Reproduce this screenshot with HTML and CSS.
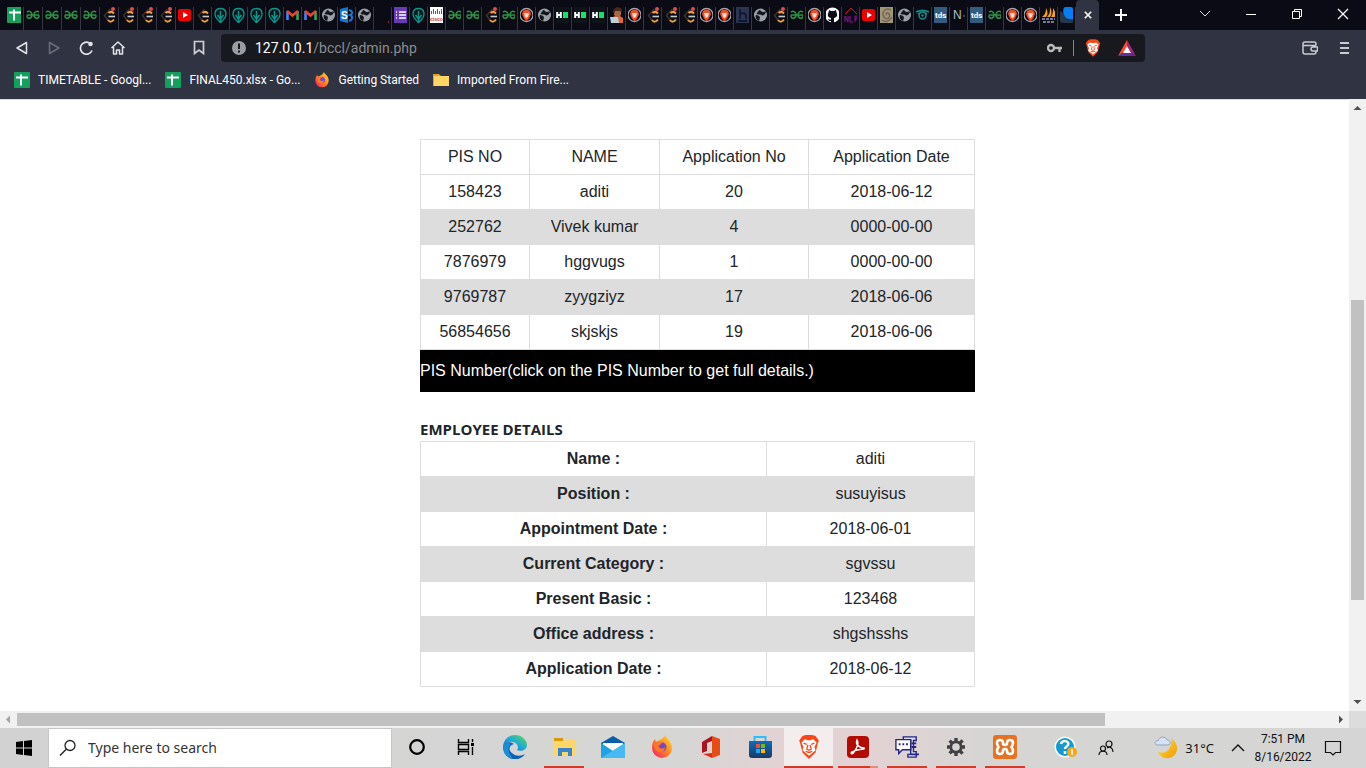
FILE: index.html
```html
<!DOCTYPE html>
<html lang="en">
<head>
<meta charset="utf-8">
<title>BCCL Admin</title>
<link rel="stylesheet" href="styles.css">
</head>
<body>
<svg class="sprite" aria-hidden="true">
  <defs>
    <linearGradient id="edgeA" x1="0" y1="1" x2="1" y2="0"><stop offset="0" stop-color="#0a5db5"/><stop offset=".5" stop-color="#1ba8dd"/><stop offset="1" stop-color="#63e04c"/></linearGradient>
    <linearGradient id="fireA" x1="1" y1="0" x2="0" y2="1"><stop offset="0" stop-color="#ffe93b"/><stop offset=".45" stop-color="#ff8a1c"/><stop offset="1" stop-color="#f5156c"/></linearGradient>
    <linearGradient id="storeA" x1="0" y1="0" x2="0" y2="1"><stop offset="0" stop-color="#0f6cbd"/><stop offset="1" stop-color="#183a66"/></linearGradient>
    <linearGradient id="moonA" x1="0" y1="0" x2="1" y2="1"><stop offset="0" stop-color="#ffe14a"/><stop offset="1" stop-color="#f09a00"/></linearGradient>
    <g id="sheets"><rect width="16" height="16" rx="1" fill="#12a05c"/><path d="M2 5.500h12M7 2.500v11" stroke="#fff" stroke-width="2"/></g>
    <g id="gfg" fill="none" stroke="#2f9247" stroke-width="1.500"><path d="M1 5.200C3 3.500 6 4.500 6 8s-4.500 4.500-5 1.500c0-1 .2-1.500.5-1.500h11c.3 0 .5.500.5 1.500-.5 3-5 2-5-1.500s3-4.500 5-2.800"/></g>
    <g id="leet" fill="none"><path d="M8.500 2 2.500 8.500 6.500 14" stroke="#3a3430" stroke-width="1.500"/><path d="M6.500 6C8.500 4 10 4.500 12 6.500M6 13c2 2.500 4 2 6-.5" stroke="#f2a235" stroke-width="2"/><path d="M6.500 9.500h6.500" stroke="#c8c8c8" stroke-width="1.600"/></g>
    <g id="leetdot"><use href="#leet"/><circle cx="11" cy="2" r="2" fill="#e34c4c"/></g>
    <g id="youtube"><rect y="2" width="13" height="12" rx="2" fill="#f00000"/><path d="m5 5 5 3-5 3z" fill="#fff"/></g>
    <g id="pin" fill="none" stroke="#0d968c"><path d="M5 14C-1 9 0 1.500 6.500 1.500S14 9 8 14l-1.500 2z" fill="#07191c" stroke-width="1.300"/><path d="M6.500 4v11M3.500 8l3 4 3-4" stroke-width="1.500"/></g>
    <g id="gmail" fill="none" stroke-width="2.600"><path d="M1.500 13V4" stroke="#4385f5"/><path d="M11.500 13V4" stroke="#34a853"/><path d="m1 4 5.500 4.500L12 4" stroke="#ea4335"/></g>
    <g id="globe"><circle cx="6.500" cy="8" r="6.500" fill="#9ba0a8"/><path d="M5 3c2 0 2 2 4 2 2 0 2-1 3 0-1 3-3 4-5 3-1-1-3 0-4-1s1-2 1-2zM2 8c2 0 4 1 4 3-1 1 0 2-1 3C2 13 1 10 2 8z" fill="#14161d"/></g>
    <g id="brave"><circle cx="6.500" cy="8" r="6.500" fill="none" stroke="#a3a4ac" stroke-width="1.300"/><path d="m3 4 2-1h3l2 1 1 3-2 4.500L6.500 14 4 11.500 2 7z" fill="#f05024"/><path d="M4 6h5L8 10l-1.500 1L5 10z" fill="#f6d8d1"/></g>
    <g id="hacker"><rect width="13" height="16" fill="#0c1419"/><path d="M1.200 5v6M4.800 5v6M1 8h4" stroke="#fff" stroke-width="2"/><rect x="7" y="5" width="5" height="6" fill="#14e368"/></g>
    <g id="tds"><rect width="13" height="16" fill="#315c80"/><text x="1" y="11" font-size="8" font-weight="bold" fill="#fff">tds</text></g>
    <g id="lion"><path d="m4 1 3-1h6l3 1 3 4-1 3-2 8-6 6-6-6-2-8-1-3z" fill="#fb4618"/><path d="m3 7 3-3 4 1 4-1 3 3-2 4 1 3-6 5-6-5 1-3z" fill="#fff"/><path d="m5 7.500 3 1m7-1-3 1M9 9l-1 4 2 1 2-1-1-4M7 15l3 1 3-1" fill="none" stroke="#fb4618" stroke-width="1.200"/></g>
    <g id="firefox"><path d="M14 0c1 4 7 5 7 13a10 10 0 0 1-20 0C1 9 2 6 4 4l1 3c2-2 6-1 9-7z" fill="url(#fireA)"/><circle cx="11" cy="12" r="4.500" fill="#7646cf"/><path d="M3 9c2-3 5-1 8-1-1 2-4 2-3 4s4 2 6 0c0 4-3 6-6 5s-5-4-5-8z" fill="#ff781f"/></g>
  </defs>
</svg>

<div class="desktop">
<header class="chrome">
  <div class="tabstrip">
    <nav class="tabs" aria-label="Open tabs">
      <button class="tab wide" aria-label="Sheet"><svg viewBox="0 0 14 16"><use href="#sheets"/></svg></button>
      <button class="tab wide" aria-label="GeeksforGeeks"><svg viewBox="0 0 14 16"><use href="#gfg"/></svg></button>
      <button class="tab wide" aria-label="GeeksforGeeks"><svg viewBox="0 0 14 16"><use href="#gfg"/></svg></button>
      <button class="tab wide" aria-label="GeeksforGeeks"><svg viewBox="0 0 14 16"><use href="#gfg"/></svg></button>
      <button class="tab wide" aria-label="GeeksforGeeks"><svg viewBox="0 0 14 16"><use href="#gfg"/></svg></button>
      <button class="tab wide" aria-label="LeetCode"><svg viewBox="0 0 14 16"><use href="#leetdot"/></svg></button>
      <button class="tab wide" aria-label="LeetCode"><svg viewBox="0 0 14 16"><use href="#leetdot"/></svg></button>
      <button class="tab wide" aria-label="LeetCode"><svg viewBox="0 0 14 16"><use href="#leetdot"/></svg></button>
      <button class="tab wide" aria-label="LeetCode"><svg viewBox="0 0 14 16"><use href="#leetdot"/></svg></button>
      <button class="tab" aria-label="YouTube"><svg viewBox="0 0 13 16"><use href="#youtube"/></svg></button>
      <button class="tab" aria-label="LeetCode"><svg viewBox="0 0 13 16"><use href="#leet"/></svg></button>
      <button class="tab" aria-label="Course"><svg viewBox="0 0 13 16"><use href="#pin"/></svg></button>
      <button class="tab" aria-label="Course"><svg viewBox="0 0 13 16"><use href="#pin"/></svg></button>
      <button class="tab" aria-label="Course"><svg viewBox="0 0 13 16"><use href="#pin"/></svg></button>
      <button class="tab" aria-label="Course"><svg viewBox="0 0 13 16"><use href="#pin"/></svg></button>
      <button class="tab" aria-label="Gmail"><svg viewBox="0 0 13 16"><use href="#gmail"/></svg></button>
      <button class="tab" aria-label="Gmail"><svg viewBox="0 0 13 16"><use href="#gmail"/></svg></button>
      <button class="tab" aria-label="Website"><svg viewBox="0 0 13 16"><use href="#globe"/></svg></button>
      <button class="tab" aria-label="SharePoint"><svg viewBox="0 0 13 16"><path d="m0 2 8-2v16l-8-2z" fill="#1677d2"/><path d="M9 3c4 1 4 4 1 5 3 1 3 5-1 6" fill="none" stroke="#1677d2" stroke-width="2"/><text x="1" y="12" font-size="10" font-weight="bold" fill="#fff">S</text></svg></button>
      <button class="tab" aria-label="Website"><svg viewBox="0 0 13 16"><use href="#globe"/></svg></button>
      <button class="tab" aria-label="Page"><svg viewBox="0 0 13 16"><path d="M12.500 14v4" stroke="#9b2830"/></svg></button>
      <button class="tab" aria-label="Form"><svg viewBox="0 0 13 16"><path d="M0 0h13v16H0z" fill="#673ab7"/><path d="M2 5h1m2 0h7M2 8h1m2 0h7M2 11h1m2 0h7" stroke="#fff" stroke-width="1.500"/></svg></button>
      <button class="tab" aria-label="Course"><svg viewBox="0 0 13 16"><use href="#pin"/></svg></button>
      <button class="tab" aria-label="Cisco"><svg viewBox="0 0 13 16"><path d="M0 0h13v16H0z" fill="#fff"/><path d="M1.500 4v3m2-5v5m2-3v3m2-5v5m2-3v3m2-5v5" stroke="#24749c"/><text x="0" y="14" font-size="5" font-weight="bold" fill="#c71f30">cisco</text></svg></button>
      <button class="tab" aria-label="GeeksforGeeks"><svg viewBox="0 0 13 16"><use href="#gfg"/></svg></button>
      <button class="tab" aria-label="GeeksforGeeks"><svg viewBox="0 0 13 16"><use href="#gfg"/></svg></button>
      <button class="tab" aria-label="LeetCode"><svg viewBox="0 0 13 16"><use href="#leetdot"/></svg></button>
      <button class="tab" aria-label="GeeksforGeeks"><svg viewBox="0 0 13 16"><use href="#gfg"/></svg></button>
      <button class="tab" aria-label="Brave"><svg viewBox="0 0 13 16"><use href="#brave"/></svg></button>
      <button class="tab" aria-label="Website"><svg viewBox="0 0 13 16"><use href="#globe"/></svg></button>
      <button class="tab" aria-label="HackerRank"><svg viewBox="0 0 13 16"><use href="#hacker"/></svg></button>
      <button class="tab" aria-label="HackerRank"><svg viewBox="0 0 13 16"><use href="#hacker"/></svg></button>
      <button class="tab" aria-label="HackerRank"><svg viewBox="0 0 13 16"><use href="#hacker"/></svg></button>
      <button class="tab" aria-label="Portfolio"><svg viewBox="0 0 13 16"><path d="M1 16v-5l4-2h5l3 2v5z" fill="#e36437"/><path d="M4 4h7v4l-2 2H6L4 8z" fill="#a66744"/><path d="M3 5c0-6 9-6 9-1v2l-2-2H5L4 7z" fill="#4b281c"/><path d="M0 10h8l1 6H1z" fill="#bcd0dc"/></svg></button>
      <button class="tab" aria-label="Brave"><svg viewBox="0 0 13 16"><use href="#brave"/></svg></button>
      <button class="tab" aria-label="LeetCode"><svg viewBox="0 0 13 16"><use href="#leetdot"/></svg></button>
      <button class="tab" aria-label="LeetCode"><svg viewBox="0 0 13 16"><use href="#leetdot"/></svg></button>
      <button class="tab" aria-label="LeetCode"><svg viewBox="0 0 13 16"><use href="#leetdot"/></svg></button>
      <button class="tab" aria-label="Brave"><svg viewBox="0 0 13 16"><use href="#brave"/></svg></button>
      <button class="tab" aria-label="Brave"><svg viewBox="0 0 13 16"><use href="#brave"/></svg></button>
      <button class="tab" aria-label="HackerEarth"><svg viewBox="0 0 13 16"><path d="M0 0h13v16H0z" fill="#2c3454"/><path d="M4 2v10M4 8c1-3 6-2 6 1v3M2 14h9" fill="none" stroke="#111730" stroke-width="1.800"/></svg></button>
      <button class="tab" aria-label="Website"><svg viewBox="0 0 13 16"><use href="#globe"/></svg></button>
      <button class="tab" aria-label="LeetCode"><svg viewBox="0 0 13 16"><use href="#leetdot"/></svg></button>
      <button class="tab" aria-label="GeeksforGeeks"><svg viewBox="0 0 13 16"><use href="#gfg"/></svg></button>
      <button class="tab" aria-label="Brave"><svg viewBox="0 0 13 16"><use href="#brave"/></svg></button>
      <button class="tab" aria-label="GitHub"><svg viewBox="0 0 13 16"><circle cx="6.500" cy="8" r="7.500" fill="#fff"/><path d="M3 3l2 1h3l2-1 .5 2.500C12 8 11 10.500 8 11v5H5v-2c-1.500.5-2.500-.5-3-1.500C3.500 12 4 13 5 12.500V11C2 10.500 1 8 2.500 5.500z" fill="#0b0c14"/></svg></button>
      <button class="tab" aria-label="NLP"><svg viewBox="0 0 13 16"><path d="m1 7 6-6 6 6" fill="none" stroke="#d3191d"/><path d="M1 15V9l3 6V9m2 0v6h3m2 0V9h2v3h-2" fill="none" stroke="#8b1694"/></svg></button>
      <button class="tab" aria-label="YouTube"><svg viewBox="0 0 13 16"><use href="#youtube"/></svg></button>
      <button class="tab" aria-label="Fractal"><svg viewBox="0 0 13 16"><path d="M0 0h13v16H0z" fill="#9c9a73"/><path d="M11 3C5 0 1 6 4 10s7 0 5-3-4 0-2 1M2 13c4 3 8 1 10-3" fill="none" stroke="#80605b" stroke-width="1.500"/></svg></button>
      <button class="tab" aria-label="Website"><svg viewBox="0 0 13 16"><use href="#globe"/></svg></button>
      <button class="tab" aria-label="Viewer"><svg viewBox="0 0 13 16"><path d="M0 5c4-2 9-2 13 0M2 7l2-1m7 1-2-1" fill="none" stroke="#168b86" stroke-width="1.800"/><circle cx="6.500" cy="8.500" r="3.500" fill="none" stroke="#168b86" stroke-width="1.500"/><circle cx="6.500" cy="8.500" r="1.200" fill="#168b86"/></svg></button>
      <button class="tab" aria-label="Towards Data Science"><svg viewBox="0 0 13 16"><use href="#tds"/></svg></button>
      <button class="tab" aria-label="Notes"><svg viewBox="0 0 13 16"><text x="1" y="12" font-size="12" fill="#a9c1d0">N</text><circle cx="12" cy="9" r="1" fill="#365b78"/></svg></button>
      <button class="tab" aria-label="Towards Data Science"><svg viewBox="0 0 13 16"><use href="#tds"/></svg></button>
      <button class="tab" aria-label="GeeksforGeeks"><svg viewBox="0 0 13 16"><use href="#gfg"/></svg></button>
      <button class="tab" aria-label="Brave"><svg viewBox="0 0 13 16"><use href="#brave"/></svg></button>
      <button class="tab" aria-label="Brave"><svg viewBox="0 0 13 16"><use href="#brave"/></svg></button>
      <button class="tab" aria-label="phpMyAdmin"><svg viewBox="0 0 13 16"><path d="M0 10c3-2 4-5 4-9 2 4 2 6 0 9zm5 0c3-3 3-6 3-10 2 4 2 7 0 10zm4 0c2-3 2-6 2-9 2 3 3 6 2 9z" fill="#f6a020"/><path d="M0 12h13M1 15h11" stroke="#767aa2" stroke-width="1.800" stroke-dasharray="3 1"/></svg></button>
      <button class="tab" aria-label="App"><svg viewBox="0 0 13 16"><path d="M0 4v9q0 3 3 3h10v-4z" fill="#21384d"/><path d="M5 0h6q2 0 2 2v10H9C4 12 1 2 5 0z" fill="#087cf0"/></svg></button>
      <button class="tab active" aria-label="Close current tab"><svg viewBox="0 0 10 10"><path d="m1 1 8 8m0-8L1 9" stroke="#fff" stroke-width="2"/></svg></button>
      <button class="newtab" aria-label="New tab"><svg viewBox="0 0 12 12"><path d="M6 0v12M0 6h12" stroke="#fff" stroke-width="2"/></svg></button>
    </nav>
    <div class="window-controls">
      <button aria-label="Search tabs"><svg viewBox="0 0 12 12"><path d="m1 3 5 5 5-5" fill="none" stroke="#ddd"/></svg></button>
      <button aria-label="Minimize"><svg viewBox="0 0 12 12"><path d="M1 6.500h10" stroke="#fff"/></svg></button>
      <button aria-label="Restore"><svg viewBox="0 0 12 12"><path d="M1.500 3.500h7v7h-7zM3.500 3V1.500h7v7H9" fill="none" stroke="#fff"/></svg></button>
      <button aria-label="Close"><svg viewBox="0 0 12 12"><path d="m1 1 10 10m0-10L1 11" stroke="#fff" stroke-width="1.200"/></svg></button>
    </div>
  </div>

  <div class="toolbar">
    <div class="nav-buttons">
      <button aria-label="Back"><svg viewBox="0 0 16 16"><path d="M12.500 2.500v11L3 8z" fill="none" stroke="#e3e3e8" stroke-width="1.500" stroke-linejoin="round"/></svg></button>
      <button aria-label="Forward"><svg viewBox="0 0 16 16"><path d="M3.500 2.500v11L13 8z" fill="none" stroke="#6b6c78" stroke-width="1.500" stroke-linejoin="round"/></svg></button>
      <button aria-label="Reload"><svg viewBox="0 0 16 16"><path d="M14 10.500A6 6 0 1 1 11 2.800" fill="none" stroke="#e3e3e8" stroke-width="1.700"/><circle cx="12.500" cy="4" r="2.300" fill="#e3e3e8"/></svg></button>
      <button aria-label="Home"><svg viewBox="0 0 16 16"><path d="m1.500 8 6.500-6 6.500 6M3.500 7v7h3v-4h3v4h3V7" fill="none" stroke="#e3e3e8" stroke-width="1.500" stroke-linejoin="round"/></svg></button>
    </div>
    <button class="bookmark" aria-label="Bookmark this page"><svg viewBox="0 0 16 16"><path d="M3.500 1.500h9v12L8 10l-4.500 3.500z" fill="none" stroke="#d0d0d4" stroke-width="1.700"/></svg></button>
    <div class="address">
      <svg class="info" viewBox="0 0 14 14" aria-hidden="true"><circle cx="7" cy="7" r="7" fill="#9b9da4"/><path d="M7 2.500V8m0 1.500v2" stroke="#17191f" stroke-width="2"/></svg>
      <div class="url" role="textbox" aria-label="Address" contenteditable="true"><b>127.0.0.1</b>/bccl/admin.php</div>
      <button class="key" aria-label="Passwords"><svg viewBox="0 0 15 12"><circle cx="4" cy="6" r="3" fill="none" stroke="#b9babd" stroke-width="2.400"/><path d="M7 6h8M12.500 6v4" fill="none" stroke="#b9babd" stroke-width="2.400"/></svg></button>
      <span class="divider"></span>
      <button class="shield" aria-label="Brave Shields"><svg viewBox="0 0 20 22"><use href="#lion"/></svg></button>
      <button class="rewards" aria-label="Brave Rewards"><svg viewBox="0 0 18 16"><path d="M9 0 0 16l9-6z" fill="#ff4b27"/><path d="m9 0 9 16-9-6z" fill="#a4217c"/><path d="m0 16 9-6 9 6z" fill="#612e9b"/><path d="m9 6 4 7H5z" fill="#fff"/></svg></button>
    </div>
    <button class="wallet" aria-label="Wallet"><svg viewBox="0 0 16 14"><path d="M14 4.500V3q0-2-2-2H3Q1 1 1 3v8q0 2 2 2h9q2 0 2-2v-1M1 4.500h13M15.500 6H11a2 2 0 0 0 0 4h4.500z" fill="none" stroke="#cacbd0" stroke-width="1.500"/></svg></button>
    <button class="menu" aria-label="Menu"><svg viewBox="0 0 12 12"><path d="M2 1h9M2 6h9M2 11h9" stroke="#cacbd0" stroke-width="2"/></svg></button>
  </div>

  <nav class="bookmarks" aria-label="Bookmarks">
    <a href="#"><svg viewBox="0 0 16 16"><use href="#sheets"/></svg>TIMETABLE - Googl...</a>
    <a href="#"><svg viewBox="0 0 16 16"><use href="#sheets"/></svg>FINAL450.xlsx - Go...</a>
    <a href="#"><svg viewBox="0 0 22 24"><use href="#firefox"/></svg>Getting Started</a>
    <a href="#"><svg viewBox="0 0 16 16"><path d="M0 2h6l2 2h8v10H0z" fill="#dca324"/><path d="M1 4h15v10H1z" fill="#ffd663"/></svg>Imported From Fire...</a>
  </nav>
</header>

<div class="viewport">
  <main class="page">
    <div class="content">
      <table class="grid applications">
        <colgroup><col class="c-pis"><col class="c-name"><col class="c-no"><col class="c-date"></colgroup>
        <tbody>
          <tr><td>PIS NO</td><td>NAME</td><td>Application No</td><td>Application Date</td></tr>
          <tr><td><a href="#details">158423</a></td><td>aditi</td><td>20</td><td>2018-06-12</td></tr>
          <tr><td><a href="#details">252762</a></td><td>Vivek kumar</td><td>4</td><td>0000-00-00</td></tr>
          <tr><td><a href="#details">7876979</a></td><td>hggvugs</td><td>1</td><td>0000-00-00</td></tr>
          <tr><td><a href="#details">9769787</a></td><td>zyygziyz</td><td>17</td><td>2018-06-06</td></tr>
          <tr><td><a href="#details">56854656</a></td><td>skjskjs</td><td>19</td><td>2018-06-06</td></tr>
        </tbody>
      </table>
      <p class="note">PIS Number(click on the PIS Number to get full details.)</p>
      <h2 class="title" id="details">EMPLOYEE DETAILS</h2>
      <table class="grid details">
        <colgroup><col class="c-label"><col></colgroup>
        <tbody>
          <tr><th scope="row">Name :</th><td>aditi</td></tr>
          <tr><th scope="row">Position :</th><td>susuyisus</td></tr>
          <tr><th scope="row">Appointment Date :</th><td>2018-06-01</td></tr>
          <tr><th scope="row">Current Category :</th><td>sgvssu</td></tr>
          <tr><th scope="row">Present Basic :</th><td>123468</td></tr>
          <tr><th scope="row">Office address :</th><td>shgshsshs</td></tr>
          <tr><th scope="row">Application Date :</th><td>2018-06-12</td></tr>
        </tbody>
      </table>
    </div>
  </main>
  <div class="vscroll" aria-hidden="true">
    <svg viewBox="0 0 17 17"><path d="M4.500 11h8l-4-4z" fill="#505050"/></svg>
    <div class="track"><span class="thumb"></span></div>
    <svg viewBox="0 0 17 17"><path d="M4.500 6h8l-4 4z" fill="#505050"/></svg>
  </div>
  <div class="hscroll" aria-hidden="true">
    <svg viewBox="0 0 17 17"><path d="M10 4.500v8l-4-4z" fill="#a3a3a3"/></svg>
    <div class="track"><span class="thumb"></span></div>
    <svg viewBox="0 0 17 17"><path d="M7 4.500v8l4-4z" fill="#505050"/></svg>
  </div>
  <div class="corner"></div>
</div>

<footer class="taskbar">
  <button class="start" aria-label="Start"><svg viewBox="0 0 16 16"><path d="m0 2 7-1v6.500H0zM8 1l8-1v7.500H8zM0 8.500h7V15l-7-1zM8 8.500h8V16l-8-1z" fill="#000"/></svg></button>
  <label class="search"><svg viewBox="0 0 18 18" aria-hidden="true"><circle cx="11" cy="6.500" r="5" fill="none" stroke="#222" stroke-width="1.300"/><path d="m7.500 10-6.500 6.500" stroke="#222" stroke-width="1.500"/></svg><input type="search" aria-label="Search" placeholder="Type here to search"></label>
  <nav class="apps" aria-label="Applications">
    <button aria-label="Cortana"><svg viewBox="0 0 24 24"><circle cx="12" cy="12" r="6.800" fill="none" stroke="#000" stroke-width="2.200"/></svg></button>
    <button aria-label="Task view"><svg viewBox="0 0 24 24"><path d="M4.500 4v3.500h10V4m-10 16v-3.500h10V20M4.500 9.500h10v5h-10zM18.500 4v3m0 5v8" fill="none" stroke="#000" stroke-width="1.400"/><path d="M17 8h3v3h-3z"/></svg></button>
    <button aria-label="Edge"><svg viewBox="0 0 24 24"><path d="M0 11C1 4 6 0 12 0c7 0 12 5 12 10 0 5-6 7-10 5 2-2 1-7-4-8C5 6 1 8 0 11z" fill="url(#edgeA)"/><path d="M0 11c1-4 7-5 11-2-5 1-6 6-2 9 4 4 10 3 13 1-3 5-9 6-13 5C3 22 0 17 0 11z" fill="#0b62b8"/><path d="M0 11c1-3 5-4 8-2-4 3-3 9 2 15C3 23 0 17 0 11z" fill="#188ed8"/></svg></button>
    <button class="running" aria-label="File Explorer"><svg viewBox="0 0 24 24"><path d="M2 3h9v5H2z" fill="#d79a0b"/><path d="M2 6h9l2-1h10v15H2z" fill="#ffd66a"/><path d="M6 21v-8h14v8h-4v-4h-6v4z" fill="#3585c8"/></svg></button>
    <button aria-label="Mail"><svg viewBox="0 0 24 24"><path d="m0 8 12-7 12 7v2L12 15 0 10z" fill="#075da8"/><path d="M2 8h20v5l-10 4L2 13z" fill="#fff"/><path d="m0 8 12 8 12-8v15H0z" fill="#1da2e6"/><path d="m0 23 24-15v15z" fill="#48baf1"/></svg></button>
    <button aria-label="Firefox"><svg viewBox="0 0 22 24"><use href="#firefox"/></svg></button>
    <button aria-label="Office"><svg viewBox="0 0 24 24"><path d="m13 1 8 3v16l-8 3z" fill="#e94b12"/><path d="m3 7 10-6v5L8 8v8l-5 2z" fill="#a91522"/><path d="m4 19 9-1v5z" fill="#d92e1f"/></svg></button>
    <button class="warm" aria-label="Store"><svg viewBox="0 0 24 24"><path d="M6.500 6V2h11v4" fill="none" stroke="#2dc0f2" stroke-width="2"/><path d="M1 6h23v14q0 3-3 3H4q-3 0-3-3z" fill="url(#storeA)"/><path d="M8 9h4v4H8z" fill="#f25022"/><path d="M13 9h4v4h-4z" fill="#7fba00"/><path d="M8 14h4v4H8z" fill="#19a8ef"/><path d="M13 14h4v4h-4z" fill="#ffb900"/></svg></button>
    <button class="running current" aria-label="Brave"><svg viewBox="0 0 20 22"><use href="#lion"/></svg></button>
    <button class="running stacked warm" aria-label="Acrobat"><svg viewBox="0 0 24 24"><rect x="1" y="1" width="22" height="22" rx="4" fill="#b30b00"/><path d="M11 5c-2 5 3 8 7 8 2 2-6 0-12 4-2 1 0 3 2 0 3-4 5-9 3-12z" fill="none" stroke="#fff" stroke-width="1.500"/></svg></button>
    <button class="running" aria-label="Messages"><svg viewBox="0 0 26 26"><path d="M9 2h14v4h-3v12h3v6h-9v-3h3V6H9z" fill="#d9dbee" stroke="#25277f" stroke-width="1.500"/><path d="M1 5h16v11H8l-4 4v-4H1z" fill="#fff" stroke="#25277f" stroke-width="1.500"/><path d="M4 10h2m2 0h2m2 0h2M17 21h9M18 9h5M18 13h5" stroke="#25277f" stroke-width="2"/></svg></button>
    <button class="running" aria-label="Settings"><svg viewBox="0 0 24 24"><path d="M12 3v4m0 10v4M3 12h4m10 0h4M5.600 5.600l3 3m7 7 3 3M5.600 18.400l3-3m7-7 3-3" stroke="#414141" stroke-width="3.400"/><circle cx="12" cy="12" r="5.200" fill="#d6d5d4" stroke="#414141" stroke-width="2.800"/></svg></button>
    <button class="running" aria-label="XAMPP"><svg viewBox="0 0 24 24"><rect width="24" height="24" rx="3" fill="#e77222"/><path d="M7 5q-3 0-3 3 0 2 1.500 4Q4 14 4 16q0 3 3 3t3-3q0-2 2-2t2 2q0 3 3 3t3-3q0-2-1.500-4Q20 10 20 8q0-3-3-3t-3 3q0 2-2 2t-2-2q0-3-3-3z" fill="none" stroke="#fff" stroke-width="2.600"/></svg></button>
  </nav>
  <div class="tray">
    <button aria-label="Help"><svg class="large" viewBox="0 0 24 24"><circle cx="11" cy="11" r="10.500" fill="#f8fbfd"/><circle cx="11" cy="11" r="9" fill="#1699cf"/><path d="M7 8c1-5 9-3 7 1-1 2-3 2-3 4m0 2v3" fill="none" stroke="#fff" stroke-width="2.500"/><circle cx="18" cy="16" r="5" fill="#f4a61d"/><path d="M18 13v6" stroke="#fff" stroke-width="1.500"/></svg></button>
    <button class="people" aria-label="People"><svg viewBox="0 0 16 16"><circle cx="11" cy="4" r="3" fill="none" stroke="#111" stroke-width="1.200"/><circle cx="5" cy="8.500" r="2.500" fill="none" stroke="#111" stroke-width="1.200"/><path d="M1 15c0-5 8-5 8 0M9 8c3-2 6 0 6 4" fill="none" stroke="#111" stroke-width="1.200"/></svg></button>
    <button class="weather"><svg class="large" viewBox="0 0 24 24"><path d="M17 2c8 5 8 15 1 19-6 3-12 0-14-5 7 3 15-3 13-14z" fill="url(#moonA)"/><path d="M3 9C0 8 1 4 4 5c1-5 8-5 9-1 4 0 4 5 1 5z" fill="#d6e3f6" stroke="#8fa3c4"/></svg>31°C</button>
    <button class="chevron" aria-label="Show hidden icons"><svg viewBox="0 0 16 16"><path d="m2 11 6-6 6 6" fill="none" stroke="#111" stroke-width="1.400"/></svg></button>
    <button class="clock"><span>7:51 PM</span><span>8/16/2022</span></button>
    <button class="notes" aria-label="Notifications"><svg viewBox="0 0 18 18"><path d="M1.500 2.500h15v11h-5L9 16l-2.500-2.500h-5z" fill="none" stroke="#111" stroke-width="1.200"/></svg></button>
  </div>
</footer>
</div>
</body>
</html>
```
FILE: styles.css
```css
* { box-sizing: border-box; }

body {
  margin: 0;
  font-family: Roboto, "Noto Sans", sans-serif;
  color: #212529;
  background: #fff;
}

button {
  border: 0;
  padding: 0;
  margin: 0;
  background: none;
  color: inherit;
  font: inherit;
  display: flex;
  align-items: center;
  justify-content: center;
  flex: none;
}

a { color: inherit; text-decoration: none; }
svg { display: block; flex: none; }
.sprite { position: absolute; width: 0; height: 0; }

.desktop {
  min-height: 100vh;
  display: flex;
  flex-direction: column;
}

/* browser frame */
.chrome { background: #303341; color: #fff; }

.tabstrip {
  display: flex;
  justify-content: space-between;
  height: 30px;
  background: #0b0b15;
}

.tabs { display: flex; padding-left: 5px; }

.tab {
  width: 18px;
  margin-top: 7px;
  align-items: flex-start;
  border-right: 1px solid #363740;
}
.tab svg { width: 13px; height: 16px; }
.tab text { font-family: "Liberation Sans", Arial, sans-serif; }
.tab.wide { width: 19px; }
.tab.wide svg { width: 14px; }

.tab.active {
  width: 23px;
  margin-top: 0;
  align-items: center;
  border: 0;
  border-radius: 4px 4px 0 0;
  background: #303341;
}
.tab.active svg { width: 8px; height: 8px; }

.newtab { width: 44px; }
.newtab svg { width: 12px; height: 12px; }

.window-controls { display: flex; }
.window-controls button { width: 46px; height: 28px; }
.window-controls svg { width: 12px; height: 12px; }

.toolbar {
  display: flex;
  align-items: center;
  height: 36px;
  padding-right: 16px;
}

.nav-buttons { display: flex; padding-left: 6px; }
.nav-buttons button { width: 32px; height: 28px; }
.toolbar svg { width: 16px; height: 16px; }
.bookmark { width: 32px; margin-left: 49px; }

.address {
  flex: 1;
  display: flex;
  align-items: center;
  height: 28px;
  margin-left: 6px;
  padding: 0 9px 0 11px;
  border-radius: 4px;
  background: #17191f;
}
.toolbar .info { width: 14px; height: 14px; }
.url {
  flex: 1;
  margin-left: 9px;
  font-family: "Liberation Sans", Arial, sans-serif;
  font-family: Roboto, "Noto Sans", sans-serif;
  font-size: 14px;
  line-height: 20px;
  color: #8b8c90;
}
.url b { color: #fff; font-weight: 400; }
.toolbar .key svg { width: 15px; height: 12px; }
.divider { width: 1px; height: 16px; margin: 0 11px; background: #85868b; }
.toolbar .shield svg { width: 16px; height: 18px; }
.rewards { margin-left: 17px; }
.toolbar .rewards svg { width: 18px; height: 16px; }
.wallet { margin-left: 157px; }
.menu { margin-left: 20px; }
.toolbar .menu svg { width: 12px; height: 12px; }

.bookmarks {
  display: flex;
  gap: 14px;
  height: 33px;
  padding: 3px 14px 0;
  font-size: 12px;
  line-height: 22px;
}
.bookmarks a { display: flex; align-items: center; gap: 8px; height: 22px; }
.bookmarks svg { width: 16px; height: 16px; }

/* page area with scroll bars */
.viewport {
  flex: 1;
  display: grid;
  grid-template-columns: minmax(0, 1fr) 17px;
  grid-template-rows: 1fr 17px;
}

.page {
  padding: 39px 0 24px 46px;
  border-top: 1px solid #dcd9e2;
  font-family: "Liberation Sans", Arial, sans-serif;
  font-size: 16px;
  line-height: 24px;
}

.content { max-width: 555px; margin: 0 auto; }

.grid {
  width: 100%;
  table-layout: fixed;
  border-collapse: collapse;
}
.grid td, .grid th {
  padding: 5px 8px;
  border: 1px solid #ddd;
  text-align: center;
}
.applications tr:nth-child(odd):not(:first-child),
.details tr:nth-child(even) { background: #ddd; }

.c-pis { width: 109px; }
.c-name { width: 130px; }
.c-no { width: 149px; }
.c-date { width: 166px; }
.c-label { width: 346px; }

.note {
  margin: 0;
  padding: 9px 0;
  background: #000;
  color: #fff;
}

.title {
  margin: 26px 0 0;
  font-family: "Open Sans", "Noto Sans", sans-serif;
  font-size: 15px;
  font-weight: 700;
  line-height: 23px;
}

.vscroll {
  display: flex;
  flex-direction: column;
  background: #f1f1f1;
}
.vscroll svg, .hscroll svg { width: 17px; height: 17px; }
.track { flex: 1; display: flex; }
.vscroll .track { flex-direction: column; justify-content: flex-end; padding: 0 2px 94px; }
.vscroll .thumb { height: 62%; background: #c1c1c1; }
.hscroll { display: flex; background: #f1f1f1; }
.hscroll .track { padding: 2px 0; }
.hscroll .thumb { width: 82.75%; background: #c1c1c1; }
.corner { background: #dcdcdc; }

/* taskbar */
.taskbar {
  display: flex;
  height: 40px;
  background: linear-gradient(90deg, #d2d2d2 0, #d6d6d5 50%, #e2d2d3 57%, #e2d2d3 64%, #d6d5d4 72%, #d5d5d5 100%);
  color: #111;
}

.start { width: 48px; }
.start svg { width: 16px; height: 16px; }

.search {
  display: flex;
  align-items: center;
  gap: 11px;
  width: 344px;
  padding: 0 10px;
  border: 1px solid #c5c5c5;
  background: #fff;
}
.search svg { width: 18px; height: 18px; }
.search input {
  flex: 1;
  min-width: 0;
  padding: 0;
  border: 0;
  outline: 0;
  background: none;
  font: 14px/20px "Noto Sans", "Open Sans", sans-serif;
}
.search input::placeholder { color: #333; opacity: 1; }

.apps { display: flex; }
.apps button { width: 49px; border-bottom: 2px solid transparent; }
.apps svg { width: 24px; height: 24px; }
.apps .running {
  background: linear-gradient(#ce3d2c, #ce3d2c) bottom / 40px 2px no-repeat;
  background-origin: border-box;
  background-clip: border-box;
}
.apps .running.current { background: #f3eeed; border-color: #ce3d2c; }
.apps .running.stacked {
  background-image: linear-gradient(90deg, #ce3d2c 80%, #e08b82 80%);
}

.tray {
  display: flex;
  margin-left: auto;
  padding-right: 12px;
}
.tray svg { width: 16px; height: 16px; }
.tray svg.large { width: 24px; height: 24px; }
.people { width: 32px; margin-left: 12px; }
.weather {
  gap: 7px;
  margin-left: 32px;
  font-family: "Noto Sans", "Open Sans", sans-serif;
  font-size: 13px;
}
.chevron { width: 32px; margin-left: 8px; }
.clock {
  flex-direction: column;
  width: 58px;
  font-size: 12px;
  line-height: 18px;
}
.notes { width: 42px; }
.tray .notes svg { width: 18px; height: 18px; }
```
